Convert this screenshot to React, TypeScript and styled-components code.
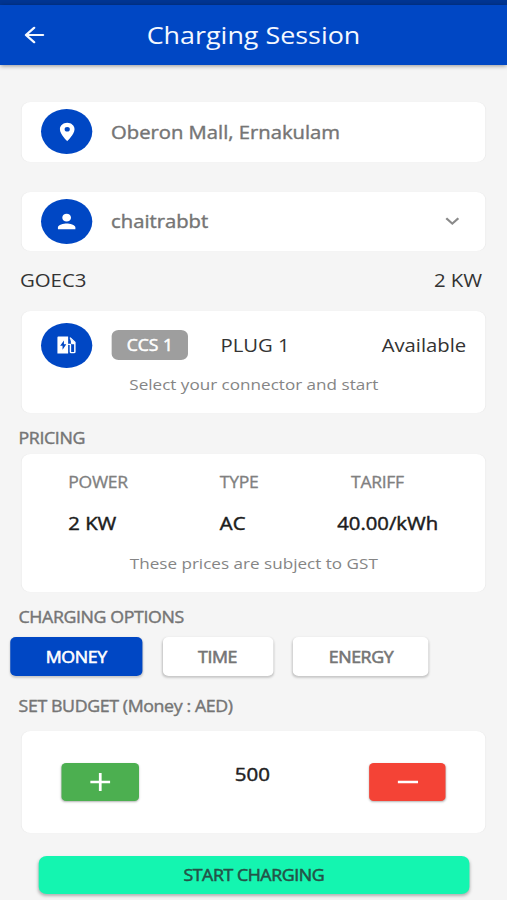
import React from "react";
import styled, { createGlobalStyle } from "styled-components";
import { MdPlace, MdPerson, MdExpandMore } from "react-icons/md";

const GlobalStyle = createGlobalStyle`
  * { box-sizing: border-box; }
  html, body { margin: 0; padding: 0; background: #f5f5f5; overflow: hidden; }
  button { font-family: inherit; border: 0; padding: 0; margin: 0; }
`;

const Screen = styled.div`
  width: 445px;
  height: 900px;
  overflow: hidden;
  transform: scaleX(1.13933);
  transform-origin: 0 0;
  background: #f5f5f5;
  font-family: "Open Sans", "Noto Sans", sans-serif;
  color: #333;
  display: flex;
  flex-direction: column;
`;

const StatusBar = styled.div`
  flex: none;
  height: 5px;
  background: #003592;
`;

const AppBar = styled.header`
  flex: none;
  height: 60px;
  display: grid;
  grid-template-columns: 60px 1fr 60px;
  align-items: center;
  justify-items: center;
  background: #0047c4;
  color: #f4f8ff;
  box-shadow: 0 1px 4px rgba(0, 0, 0, 0.4);
`;

const Title = styled.h1`
  margin: 0;
  font-size: 23.6px;
  line-height: 60px;
  font-weight: 400;
`;

const Main = styled.main`
  display: flex;
  flex-direction: column;
  padding: 37px 18.8px 0 19.3px;
`;

const Card = styled.section<{ $h: number }>`
  flex: none;
  height: ${(p) => p.$h}px;
  background: #fff;
  border-radius: 8px;
  box-shadow: 0 0 1px rgba(0, 0, 0, 0.05);
`;

const FieldCard = styled(Card)`
  display: flex;
  align-items: center;
  padding: 0 17px 0 17px;
  margin-bottom: 30px;
`;

const Badge = styled.span`
  flex: none;
  width: 44.8px;
  height: 45px;
  border-radius: 50%;
  background: #0047c4;
  color: #fff;
  display: flex;
  align-items: center;
  justify-content: center;
`;

const FieldText = styled.span`
  flex: 1;
  margin-left: 16.4px;
  font-size: 17.75px;
  line-height: 24px;
  font-weight: 400;
  color: #757575;
  -webkit-text-stroke: 0.4px currentColor;
`;

const StationRow = styled.div`
  display: flex;
  justify-content: space-between;
  height: 60px;
  margin-top: -31px;
  margin-bottom: 1px;
  padding: 0 3px 0 0;
  margin-left: -1.8px;
  font-size: 17.9px;
  line-height: 60px;
  color: #333;
`;

const ConnectorRow = styled.div`
  display: flex;
  align-items: center;
  padding: 12px 17px 0 17px;
  font-size: 17.8px;
  line-height: 45px;
`;

const Chip = styled.span`
  width: 67px;
  height: 30px;
  margin-left: 17px;
  border-radius: 6px;
  background: #9e9e9e;
  color: #fff;
  font-size: 15.4px;
  line-height: 32px;
  font-weight: 400;
  -webkit-text-stroke: 0.5px currentColor;
  text-align: center;
`;

const PlugName = styled.span`
  flex: 1;
  margin-left: 28.5px;
`;

const Note = styled.p<{ $top: number }>`
  margin: ${(p) => p.$top}px 0 0;
  font-size: 15px;
  line-height: 22px;
  text-align: center;
  color: #858585;
`;

const SectionLabel = styled.h2<{ $h: number; $pad: number }>`
  margin: 0 0 0 -3px;
  height: ${(p) => p.$h}px;
  padding-top: ${(p) => p.$pad}px;
  font-size: 15.6px;
  letter-spacing: -0.34px;
  line-height: 22px;
  font-weight: 400;
  color: #757575;
  -webkit-text-stroke: 0.4px currentColor;
`;

const PriceTable = styled.dl`
  margin: 0;
  padding: 17px 0 0 40.7px;
  display: grid;
  grid-template-columns: 133px 103px auto;
  justify-content: start;
`;

const PriceItem = styled.div<{ $center?: boolean }>`
  text-align: ${(p) => (p.$center ? "center" : "left")};
`;

const PriceName = styled.dt<{ $shift?: number }>`
  font-size: 15.4px;
  letter-spacing: -0.27px;
  line-height: 24px;
  font-weight: 400;
  color: #808080;
  padding-right: ${(p) => p.$shift ?? 0}px;
  -webkit-text-stroke: 0.3px currentColor;
`;

const PriceValue = styled.dd`
  margin: 15px 0 0;
  font-size: 17.8px;
  line-height: 26px;
  font-weight: 400;
  color: #1c1c1c;
  -webkit-text-stroke: 0.45px currentColor;
`;

const Tabs = styled.div`
  display: flex;
  gap: 17.8px;
  margin-left: -10.1px;
  height: 39px;
`;

const Tab = styled.button<{ $w: number; $active?: boolean }>`
  width: ${(p) => p.$w}px;
  height: 39px;
  border-radius: 5px;
  background: ${(p) => (p.$active ? "#0047c4" : "#fff")};
  color: ${(p) => (p.$active ? "#fff" : "#757575")};
  font-size: 15.6px;
  letter-spacing: -0.36px;
  font-weight: 400;
  -webkit-text-stroke: 0.55px currentColor;
  line-height: 38px;
  box-shadow: 0 2px 2px rgba(0, 0, 0, 0.17), 0 0 2px rgba(0, 0, 0, 0.07);
`;

const BudgetCard = styled(Card)`
  display: flex;
  justify-content: space-between;
  align-items: center;
  padding: 0 35px;
`;

const StepButton = styled.button<{ $color: string }>`
  width: 67.3px;
  height: 38px;
  border-radius: 4px;
  background: ${(p) => p.$color};
  display: flex;
  align-items: center;
  justify-content: center;
  box-shadow: 0 1px 2px rgba(0, 0, 0, 0.3);
`;

const Amount = styled.output`
  font-size: 18px;
  line-height: 26px;
  font-weight: 400;
  -webkit-text-stroke: 0.45px currentColor;
  color: #222;
  margin: 0 2.5px 15px 0;
`;

const StartButton = styled.button`
  height: 38px;
  margin: 23px 14.7px 0;
  border-radius: 7px;
  background: #14f5b0;
  color: #245247;
  font-size: 15.6px;
  letter-spacing: -0.38px;
  line-height: 38px;
  font-weight: 400;
  -webkit-text-stroke: 0.5px currentColor;
  box-shadow: 0 2px 3px rgba(0, 0, 0, 0.28);
`;

const BackIcon = () => (
  <svg width="24" height="24" viewBox="0 0 24 24" fill="none" stroke="currentColor" strokeWidth="2.1" strokeLinecap="round" strokeLinejoin="round">
    <path d="M19.8 12H5M12 4.8 4.8 12l7.2 7.2" />
  </svg>
);

const ChargerIcon = () => (
  <svg width="17" height="18" viewBox="0 0 17 18">
    <path fill="#fff" fillRule="evenodd" d="M1.2 0.6h8.6v16.8H0.4V1.4q0-.8.8-.8zM6.1 4.4 2.8 9.7h2.1v4L8.2 8.3H6.1z" />
    <path fill="none" stroke="#fff" strokeWidth="1.3" d="M9.8 8.4h2v7.7q0 .6.6.6h2.5q.8 0 .8-.8V6.2L11.4 1.6" />
    <path fill="#fff" d="M11.4 2.6 15.8 6.8v1.4h-2.6q-1-.2-1-1.2V5.2z" />
  </svg>
);

const PlusIcon = () => (
  <svg width="18" height="18" viewBox="0 0 18 18" stroke="#fff" strokeWidth="2.4">
    <path d="M0.3 9h17.4M9 0v18" />
  </svg>
);

const MinusIcon = () => (
  <svg width="18" height="18" viewBox="0 0 18 18" stroke="#fff" strokeWidth="2.6">
    <path d="M0 9h18" />
  </svg>
);

export default function App() {
  return (
    <>
      <GlobalStyle />
      <Screen>
        <StatusBar />
        <AppBar>
          <BackIcon />
          <Title>Charging Session</Title>
        </AppBar>
        <Main>
          <FieldCard $h={59.5}>
            <Badge><MdPlace size={22} /></Badge>
            <FieldText>Oberon Mall, Ernakulam</FieldText>
          </FieldCard>
          <FieldCard $h={59}>
            <Badge><MdPerson size={23} /></Badge>
            <FieldText>chaitrabbt</FieldText>
            <MdExpandMore size={24} color="#8a8a8a" />
          </FieldCard>
          <StationRow>
            <span>GOEC3</span>
            <span>2 KW</span>
          </StationRow>
          <Card $h={102}>
            <ConnectorRow>
              <Badge><ChargerIcon /></Badge>
              <Chip>CCS 1</Chip>
              <PlugName>PLUG 1</PlugName>
              <span>Available</span>
            </ConnectorRow>
            <Note $top={5}>Select your connector and start</Note>
          </Card>
          <SectionLabel $h={41} $pad={14.5}>PRICING</SectionLabel>
          <Card $h={138}>
            <PriceTable>
              <PriceItem>
                <PriceName>POWER</PriceName>
                <PriceValue>2 KW</PriceValue>
              </PriceItem>
              <PriceItem>
                <PriceName>TYPE</PriceName>
                <PriceValue>AC</PriceValue>
              </PriceItem>
              <PriceItem $center>
                <PriceName $shift={18}>TARIFF</PriceName>
                <PriceValue>40.00/kWh</PriceValue>
              </PriceItem>
            </PriceTable>
            <Note $top={16.5}>These prices are subject to GST</Note>
          </Card>
          <SectionLabel $h={45.5} $pad={14.5}>CHARGING OPTIONS</SectionLabel>
          <Tabs>
            <Tab $w={115.5} $active>MONEY</Tab>
            <Tab $w={97}>TIME</Tab>
            <Tab $w={119}>ENERGY</Tab>
          </Tabs>
          <SectionLabel $h={54.5} $pad={19}>SET BUDGET (Money : AED)</SectionLabel>
          <BudgetCard $h={102.5}>
            <StepButton $color="#4caf50" aria-label="Increase"><PlusIcon /></StepButton>
            <Amount>500</Amount>
            <StepButton $color="#f44336" aria-label="Decrease"><MinusIcon /></StepButton>
          </BudgetCard>
          <StartButton>START CHARGING</StartButton>
        </Main>
      </Screen>
    </>
  );
}
